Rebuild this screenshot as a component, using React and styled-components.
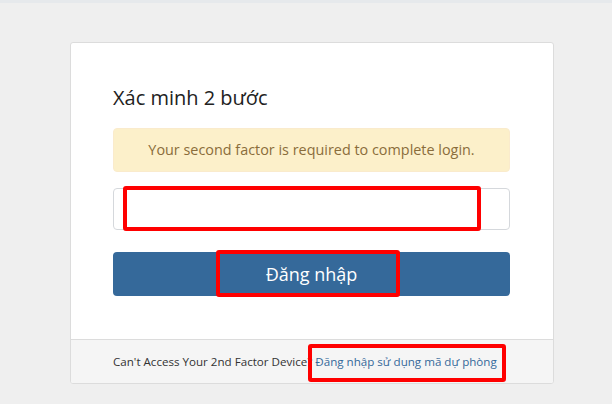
import React from "react";
import styled, { createGlobalStyle } from "styled-components";

const GlobalStyle = createGlobalStyle`
  html, body {
    margin: 0;
    padding: 0;
    background: #efefef;
    font-family: "Open Sans", "Liberation Sans", sans-serif;
    color: #333;
  }
`;

const TopStrip = styled.div`
  height: 3px;
  background: #e6e9ec;
`;

const Page = styled.div`
  padding: 39px 0 20px 70px;
`;

const Card = styled.div`
  width: 484px;
  box-sizing: border-box;
  background: #fff;
  border: 1px solid #dcdcdc;
  border-radius: 3px;
  overflow: hidden;
`;

const Body = styled.div`
  padding: 41px 43px 43px 42px;
`;

const Title = styled.h3`
  margin: 0 0 17px;
  font-size: 20px;
  font-weight: 400;
  line-height: 27px;
  color: #222;
`;

const Alert = styled.div`
  box-sizing: border-box;
  height: 44px;
  padding: 11px 8px;
  background: #fcf0ca;
  border: 1px solid #faebcc;
  border-radius: 4px;
  color: #8a6d3b;
  font-size: 14.4px;
  line-height: 20px;
  text-align: center;
  margin-bottom: 16px;
`;

const Field = styled.div`
  position: relative;
  margin-bottom: 22px;
`;

const Input = styled.input`
  display: block;
  width: 100%;
  height: 42px;
  box-sizing: border-box;
  border: 1px solid #d5d8dc;
  border-radius: 4px;
  padding: 6px 12px;
  font-size: 14px;
  font-family: inherit;
  outline: none;
`;

const Button = styled.button`
  position: relative;
  display: block;
  width: 100%;
  height: 44px;
  border: none;
  border-radius: 4px;
  background: #35699a;
  color: #fff;
  font-family: inherit;
  font-size: 18px;
  line-height: 24px;
  padding: 0;
  cursor: pointer;
`;

const Footer = styled.div`
  position: relative;
  height: 43px;
  border-top: 1px solid #dcdcdc;
  background: #f5f5f5;
  padding-left: 42px;
  font-size: 11.6px;
  line-height: 43px;
  color: #333;
`;

const Link = styled.a`
  color: #35699a;
  text-decoration: none;
`;

const Mark = styled.span`
  position: absolute;
  left: ${(p) => p.$left}px;
  top: ${(p) => p.$top}px;
  width: ${(p) => p.$w}px;
  height: ${(p) => p.$h}px;
  box-sizing: border-box;
  border: 4px solid #ff0000;
  border-radius: 3px;
  pointer-events: none;
`;

export default function App() {
  return (
    <>
      <GlobalStyle />
      <TopStrip />
      <Page>
        <Card>
          <Body>
            <Title>Xác minh 2 bước</Title>
            <Alert>Your second factor is required to complete login.</Alert>
            <Field>
              <Input type="text" />
              <Mark $left={10} $top={-2} $w={358} $h={45} />
            </Field>
            <Button>
              Đăng nhập
              <Mark $left={103} $top={-2} $w={184} $h={47} />
            </Button>
          </Body>
          <Footer>
            Can't Access Your 2nd Factor Device?{" "}
            <Link href="#">Đăng nhập sử dụng mã dự phòng</Link>
            <Mark $left={237} $top={4} $w={198} $h={38} />
          </Footer>
        </Card>
      </Page>
    </>
  );
}
